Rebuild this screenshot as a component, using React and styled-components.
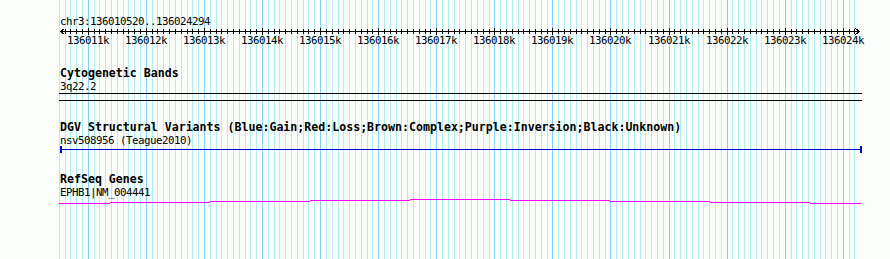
import React from 'react';
import styled, { createGlobalStyle } from 'styled-components';

const WIDTH = 890;
const HEIGHT = 259;
const START = 136010520;
const LEFT = 60.4;
const BP_PX = 0.058077;

const toX = (bp) => Math.floor(LEFT + (bp - START) * BP_PX);

const GRID = [];
for (let bp = 136010500; bp <= 136024200; bp += 100) GRID.push(bp);

const TICKS = GRID.filter((bp) => bp > START);

// exon-less connector drawn by the gene glyph, one row per step
const GENE_STEPS = [
  [59, 110, 4],
  [110, 210, 3],
  [210, 310, 2],
  [310, 410, 1],
  [410, 510, 0],
  [510, 610, 1],
  [610, 710, 2],
  [710, 810, 3],
  [810, 861, 4],
];

const GlobalStyle = createGlobalStyle`
  body {
    margin: 0;
    background: #fbfdfb;
  }
`;

const Panel = styled.div`
  position: relative;
  width: ${WIDTH}px;
  height: ${HEIGHT}px;
  overflow: hidden;
  background: #fbfdfb;
  font-family: 'DejaVu Sans Mono', 'Liberation Mono', monospace;
  color: #000;
`;

const GridLayer = styled.svg`
  position: absolute;
  top: 0;
  left: 0;
  display: block;
  shape-rendering: crispEdges;
`;

const Tracks = styled.div`
  position: relative;
  display: flex;
  flex-direction: column;
`;

const Track = styled.section`
  display: flex;
  flex-direction: column;
  padding-top: ${(p) => p.$gap}px;
`;

const Title = styled.h3`
  margin: 0;
  padding-left: 60px;
  font-size: 11.6px;
  line-height: 13px;
  font-weight: bold;
  white-space: pre;
`;

const Label = styled.div`
  padding-left: 60px;
  font-size: 10.8px;
  letter-spacing: -0.5px;
  line-height: 13px;
  white-space: pre;
`;

const Glyph = styled.svg`
  display: block;
  margin-top: ${(p) => p.$shift || 0}px;
  shape-rendering: crispEdges;
  overflow: visible;

  text {
    font-size: 10.8px;
    letter-spacing: -0.5px;
    fill: #000;
  }
`;

const Grid = () => (
  <GridLayer width={WIDTH} height={HEIGHT}>
    {GRID.map((bp) => (
      <rect
        key={bp}
        x={toX(bp)}
        y={0}
        width={1}
        height={HEIGHT}
        fill={bp % 1000 === 0 ? '#87cefa' : '#afeeee'}
      />
    ))}
  </GridLayer>
);

const Ruler = () => (
  <Track $gap={15}>
    <Label>chr3:136010520..136024294</Label>
    <Glyph width={WIDTH} height={20}>
      <rect x={60} y={3} width={800} height={1} fill="#000" />
      <path d="M64.5,0.5 L60.5,3.5 L64.5,6.5" stroke="#000" fill="none" />
      <path d="M855.5,0.5 L859.5,3.5 L855.5,6.5" stroke="#000" fill="none" />
      {TICKS.map((bp) => {
        const major = bp % 1000 === 0;
        return (
          <rect
            key={bp}
            x={toX(bp)}
            y={major ? 0 : 1}
            width={1}
            height={major ? 7 : 5}
            fill="#000"
          />
        );
      })}
      {TICKS.filter((bp) => bp % 1000 === 0).map((bp) => (
        <text key={bp} x={toX(bp)} y={16} textAnchor="middle">
          {bp / 1000}k
        </text>
      ))}
    </Glyph>
  </Track>
);

const App = () => (
  <Panel>
    <GlobalStyle />
    <Grid />
    <Tracks>
      <Ruler />

      <Track $gap={19}>
        <Title>Cytogenetic Bands</Title>
        <Label>3q22.2</Label>
        <Glyph width={WIDTH} height={8}>
          <rect x={59} y={0} width={803} height={1} fill="#000" />
          <rect x={59} y={7} width={803} height={1} fill="#000" />
        </Glyph>
      </Track>

      <Track $gap={20}>
        <Title>
          DGV Structural Variants (Blue:Gain;Red:Loss;Brown:Complex;Purple:Inversion;Black:Unknown)
        </Title>
        <Label>nsv508956 (Teague2010)</Label>
        <Glyph width={WIDTH} height={7} $shift={-1}>
          <rect x={60} y={3} width={802} height={1} fill="#0000dd" />
          <rect x={60} y={0} width={2} height={7} fill="#0000dd" />
          <rect x={860} y={0} width={2} height={7} fill="#0000dd" />
        </Glyph>
      </Track>

      <Track $gap={20}>
        <Title>RefSeq Genes</Title>
        <Label>EPHB1|NM_004441</Label>
        <Glyph width={WIDTH} height={6}>
          {GENE_STEPS.map(([x1, x2, row]) => (
            <rect key={x1} x={x1} y={row} width={x2 - x1} height={1} fill="#f0f" />
          ))}
        </Glyph>
      </Track>
    </Tracks>
  </Panel>
);

export default App;
